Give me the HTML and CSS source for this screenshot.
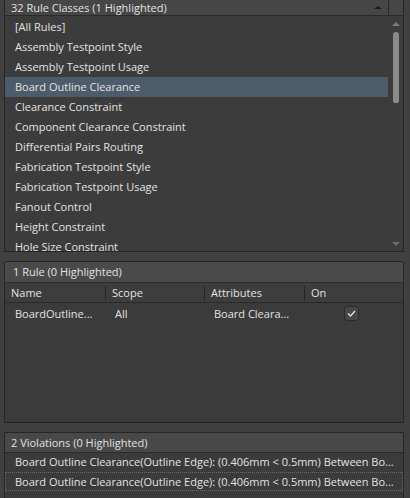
FILE: index.html
```html
<!DOCTYPE html>
<html>
<head>
<meta charset="utf-8">
<link rel="stylesheet" href="styles.css">
</head>
<body>
<div class="page">
  <section class="panel classes">
    <div class="phead">
      <span class="ptitle">32 Rule Classes (1 Highlighted)</span>
      <span class="harrow"></span>
      <span class="hside"></span>
    </div>
    <div class="listwrap">
      <ul class="list">
        <li>[All Rules]</li>
        <li>Assembly Testpoint Style</li>
        <li>Assembly Testpoint Usage</li>
        <li class="sel">Board Outline Clearance</li>
        <li>Clearance Constraint</li>
        <li>Component Clearance Constraint</li>
        <li>Differential Pairs Routing</li>
        <li>Fabrication Testpoint Style</li>
        <li>Fabrication Testpoint Usage</li>
        <li>Fanout Control</li>
        <li>Height Constraint</li>
        <li>Hole Size Constraint</li>
      </ul>
      <div class="vscroll">
        <span class="sarrow up"></span>
        <span class="thumb"></span>
        <span class="sarrow down"></span>
      </div>
    </div>
  </section>

  <section class="panel rules">
    <div class="phead2">1 Rule (0 Highlighted)</div>
    <div class="cols">
      <span class="c1">Name</span>
      <span class="c2">Scope</span>
      <span class="c3">Attributes</span>
      <span class="c4">On</span>
    </div>
    <div class="row">
      <span class="c1">BoardOutline...</span>
      <span class="c2">All</span>
      <span class="c3">Board Cleara...</span>
      <span class="c4"><span class="chk"><svg width="9" height="7" viewBox="0 0 9 7"><path d="M1 3.5 L3.5 6 L8 1" fill="none" stroke="#e0e0e0" stroke-width="1.3"/></svg></span></span>
    </div>
  </section>

  <section class="panel viol">
    <div class="phead3">2 Violations (0 Highlighted)</div>
    <div class="vrow">Board Outline Clearance(Outline Edge): (0.406mm &lt; 0.5mm) Between Bo...</div>
    <div class="vrow focus">Board Outline Clearance(Outline Edge): (0.406mm &lt; 0.5mm) Between Bo...</div>
  </section>
</div>
</body>
</html>
```

FILE: styles.css
```css
* { box-sizing: border-box; }
html, body { margin: 0; padding: 0; }
body {
  background: #404040;
  font-family: "Open Sans", "Noto Sans", sans-serif;
  font-size: 11px;
  color: #e2e2e2;
  width: 410px;
  height: 498px;
  overflow: hidden;
}
.page {
  padding: 0 6px 0 4px;
  display: flex;
  flex-direction: column;
}
.panel {
  border: 1px solid #262626;
  background: #3b3b3b;
}
.classes {
  margin-top: -1px;
  height: 253px;
  display: flex;
  flex-direction: column;
}
.phead {
  height: 16px;
  background: #464646;
  border-bottom: 1px solid #2a2a2a;
  display: flex;
  align-items: center;
}
.ptitle {
  flex: 1;
  padding-left: 6px;
  line-height: 15px;
}
.harrow {
  width: 0; height: 0;
  border-left: 4px solid transparent;
  border-right: 4px solid transparent;
  border-bottom: 3px solid #1c1c1c;
  margin-right: 6px;
}
.hside {
  width: 15px;
  height: 100%;
  border-left: 1px solid #2a2a2a;
}
.listwrap {
  flex: 1;
  display: flex;
  background: #3c3c3c;
  overflow: hidden;
}
.list {
  flex: 1;
  list-style: none;
  margin: 0;
  padding: 1px 0 0 0;
}
.list li {
  height: 20px;
  line-height: 20px;
  padding-left: 10px;
  white-space: nowrap;
}
.list li.sel { background: #4c5c6a; }
.vscroll {
  width: 15px;
  display: flex;
  flex-direction: column;
  align-items: center;
}
.sarrow {
  width: 0; height: 0;
  border-left: 4px solid transparent;
  border-right: 4px solid transparent;
}
.sarrow.up {
  border-bottom: 4px solid #7a7a7a;
  margin-top: 6px;
}
.thumb {
  width: 6px;
  height: 71px;
  background: #8a8a8a;
  border-radius: 3px 3px 2px 2px;
  margin-top: 6px;
}
.sarrow.down {
  border-top: 4px solid #6a6a6a;
  margin-top: auto;
  margin-bottom: 5px;
}
.rules {
  margin-top: 9px;
  height: 162px;
  border-radius: 3px 3px 0 0;
}
.phead2 {
  height: 21px;
  line-height: 20px;
  background: #4a4a4a;
  border-bottom: 1px solid #2a2a2a;
  padding-left: 8px;
  border-radius: 2px 2px 0 0;
}
.cols, .row {
  display: grid;
  grid-template-columns: 100px 99px 100px 1fr;
  height: 20px;
  align-items: center;
}
.cols {
  border-bottom: 1px solid #2a2a2a;
  background: #3d3d3d;
}
.cols span { padding-left: 6px; line-height: 14px; }
.cols .c2, .cols .c3, .cols .c4 { border-left: 1px solid #262626; }
.row span { padding-left: 10px; }
.row .c4 { padding-left: 40px; display: flex; align-items: center; }
.chk {
  width: 15px;
  height: 15px;
  border: 1px solid #2a2a2a;
  background: #474747;
  border-radius: 3px;
  display: flex;
  align-items: center;
  justify-content: center;
  padding: 0 !important;
}
.viol {
  margin-top: 9px;
  height: 80px;
}
.phead3 {
  height: 20px;
  line-height: 19px;
  background: #484848;
  border-bottom: 1px solid #2a2a2a;
  padding-left: 6px;
}
.vrow {
  height: 19px;
  line-height: 18px;
  padding-left: 10px;
  white-space: nowrap;
}
.vrow.focus {
  border: 1px dotted #6a6a6a;
  line-height: 17px;
  padding-left: 9px;
}
```
